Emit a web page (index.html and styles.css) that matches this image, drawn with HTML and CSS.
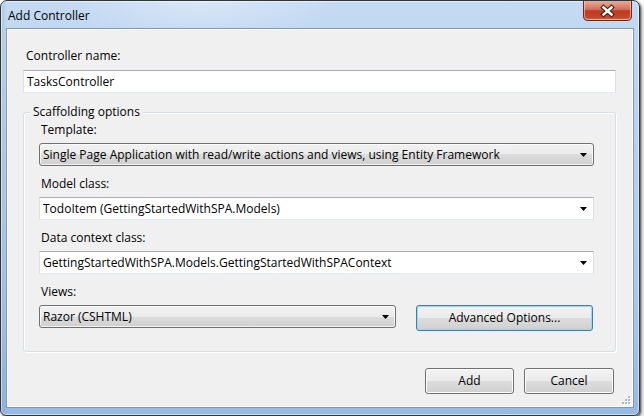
FILE: index.html
```html
<!DOCTYPE html>
<html>
<head>
<meta charset="utf-8">
<link rel="stylesheet" href="styles.css">
</head>
<body>
<div class="window">
  <div class="titlebar">
    <span class="title">Add Controller</span>
    <div class="close">
      <svg width="49" height="20" viewBox="0 0 49 20">
        <defs>
          <linearGradient id="cg" x1="0" y1="0" x2="0" y2="1">
            <stop offset="0" stop-color="#e6ad9e"/>
            <stop offset="0.45" stop-color="#d26c56"/>
            <stop offset="0.5" stop-color="#c03a20"/>
            <stop offset="0.85" stop-color="#c4472b"/>
            <stop offset="1" stop-color="#db7f65"/>
          </linearGradient>
        </defs>
        <path d="M0.5 0 V15 Q0.5 19.5 5 19.5 H44 Q48.5 19.5 48.5 15 V0" fill="url(#cg)" stroke="#6b2a1e" stroke-width="1"/>
        <path d="M1.5 0 V15 Q1.5 18.5 5 18.5 H44 Q47.5 18.5 47.5 15 V0" fill="none" stroke="rgba(255,220,210,0.55)" stroke-width="1"/>
        <g stroke-linecap="square">
          <path d="M20.5 6.5 L28.5 13.5 M28.5 6.5 L20.5 13.5" stroke="#4b1f17" stroke-width="4.6"/>
          <path d="M20.5 6.5 L28.5 13.5 M28.5 6.5 L20.5 13.5" stroke="#ffffff" stroke-width="2.4"/>
        </g>
      </svg>
    </div>
  </div>
  <div class="client">
    <div class="label">Controller name:</div>
    <div class="textbox">TasksController</div>

    <div class="group">
      <span class="legend">Scaffolding options</span>

      <div class="label">Template:</div>
      <div class="combo ro">
        <span>Single Page Application with read/write actions and views, using Entity Framework</span>
        <svg class="arrow" width="7" height="4" viewBox="0 0 7 4"><path d="M0 0 H7 L3.5 4 Z" fill="#000"/></svg>
      </div>

      <div class="label">Model class:</div>
      <div class="combo edit">
        <span>TodoItem (GettingStartedWithSPA.Models)</span>
        <svg class="arrow" width="7" height="4" viewBox="0 0 7 4"><path d="M0 0 H7 L3.5 4 Z" fill="#000"/></svg>
      </div>

      <div class="label">Data context class:</div>
      <div class="combo edit">
        <span>GettingStartedWithSPA.Models.GettingStartedWithSPAContext</span>
        <svg class="arrow" width="7" height="4" viewBox="0 0 7 4"><path d="M0 0 H7 L3.5 4 Z" fill="#000"/></svg>
      </div>

      <div class="label views-label">Views:</div>
      <div class="views-row">
        <div class="combo ro views">
          <span>Razor (CSHTML)</span>
          <svg class="arrow" width="7" height="4" viewBox="0 0 7 4"><path d="M0 0 H7 L3.5 4 Z" fill="#000"/></svg>
        </div>
        <button class="btn focused advanced">Advanced Options...</button>
      </div>
    </div>

    <div class="actions">
      <button class="btn add">Add</button>
      <button class="btn cancel">Cancel</button>
    </div>

    <svg class="grip" width="10" height="10" viewBox="0 0 10 10">
      <g fill="#ffffff">
        <rect x="8" y="2" width="2" height="2"/>
        <rect x="5" y="5" width="2" height="2"/><rect x="8" y="5" width="2" height="2"/>
        <rect x="2" y="8" width="2" height="2"/><rect x="5" y="8" width="2" height="2"/><rect x="8" y="8" width="2" height="2"/>
      </g>
      <g fill="#b4b8bd">
        <rect x="7" y="1" width="2" height="2"/>
        <rect x="4" y="4" width="2" height="2"/><rect x="7" y="4" width="2" height="2"/>
        <rect x="1" y="7" width="2" height="2"/><rect x="4" y="7" width="2" height="2"/><rect x="7" y="7" width="2" height="2"/>
      </g>
    </svg>
  </div>
</div>
</body>
</html>
```

FILE: styles.css
```css
body {
  margin: 0;
  background: #ffffff;
  font-family: "Open Sans", "Noto Sans", sans-serif;
  font-size: 12px;
  color: #000000;
}

.window {
  width: 640px;
  height: 416px;
  box-sizing: border-box;
  border: 1px solid #2f343b;
  border-radius: 7px 7px 6px 6px;
  display: flex;
  flex-direction: column;
  overflow: hidden;
  background:
    radial-gradient(ellipse 140px 40px at 200px 0px, rgba(255,255,255,0.35), rgba(255,255,255,0) 100%),
    linear-gradient(90deg, rgba(40,60,90,0.12) 0px, rgba(40,60,90,0) 6px),
    linear-gradient(180deg, #c4daf2 0%, #b8d3ef 30%, #abc9eb 70%, #96bae3 100%);
  box-shadow: inset 0 0 0 1px rgba(255,255,255,0.55), 1px 1px 2px rgba(0,0,0,0.6), 3px 3px 4px rgba(0,0,0,0.25);
}

.titlebar {
  height: 29px;
  flex: none;
  display: flex;
  justify-content: space-between;
  align-items: flex-start;
  padding: 0 7px;
}

.title {
  margin-top: 7px;
  line-height: 16px;
  font-size: 12px;
}

.close {
  width: 49px;
  height: 20px;
}

.close svg {
  display: block;
}

.client {
  flex: 1;
  margin: 0 7px 9px;
  background: #f0f0f0;
  padding: 18px 16px 0 15px;
  position: relative;
  box-shadow: 0 0 0 1px #fbfdff, 0 0 0 2px #8397b1;
}

.label {
  line-height: 16px;
  height: 16px;
  padding-left: 3px;
  margin-bottom: 5px;
}

.client > .label {
  margin-bottom: 6px;
}

.textbox {
  height: 23px;
  box-sizing: border-box;
  background: #ffffff;
  border: 1px solid;
  border-color: #abadb3 #dbdfe6 #e3e9ef #e2e3ea;
  padding: 0 3px;
  line-height: 21px;
}

.group {
  margin-top: 19px;
  border: 1px solid #d5dfe5;
  border-radius: 3px;
  padding: 9px 21px 20px 15px;
  position: relative;
  box-shadow: inset 1px 1px 0 #ffffff, 1px 1px 0 #ffffff;
}

.group .label {
  padding-left: 2px;
}

.group .views-label {
  margin-top: 1px;
}

.legend {
  position: absolute;
  left: 6px;
  top: -9px;
  padding: 0 3px;
  line-height: 16px;
  background: #f0f0f0;
}

.combo {
  height: 23px;
  box-sizing: border-box;
  display: flex;
  align-items: center;
  justify-content: space-between;
  padding: 0 6px 0 3px;
  margin-bottom: 10px;
  white-space: nowrap;
}

.combo .arrow {
  flex: none;
  display: block;
}

.combo.ro {
  border: 1px solid #707070;
  border-radius: 3px;
  background: linear-gradient(180deg, #f2f2f2 0%, #ebebeb 50%, #dddddd 50%, #cfcfcf 100%);
  box-shadow: inset 0 0 0 1px rgba(255,255,255,0.75);
}

.combo.edit {
  background: #ffffff;
  border: 1px solid;
  border-color: #abadb3 #dbdfe6 #e3e9ef #e2e3ea;
}

.views-row {
  margin-top: 2px;
  display: flex;
  align-items: flex-start;
  gap: 20px;
}

.combo.views {
  width: 357px;
  margin-bottom: 0;
}

.btn {
  box-sizing: border-box;
  height: 26px;
  border: 1px solid #707070;
  border-radius: 3px;
  background: linear-gradient(180deg, #f2f2f2 0%, #ebebeb 50%, #dddddd 50%, #cfcfcf 100%);
  box-shadow: inset 0 0 0 1px #fcfcfc;
  font: inherit;
  color: #000000;
  padding: 0;
  line-height: 22px;
}

.btn.focused {
  border-color: #3c7fb1;
  box-shadow: inset 0 0 0 1px #9ad9f6;
}

.advanced {
  width: 177px;
  height: 26px;
}

.actions {
  margin-top: 16px;
  display: flex;
  justify-content: flex-end;
  gap: 10px;
  padding-right: 2px;
}

.add {
  width: 89px;
}

.cancel {
  width: 90px;
}

.grip {
  position: absolute;
  right: 1px;
  bottom: 1px;
}
```
